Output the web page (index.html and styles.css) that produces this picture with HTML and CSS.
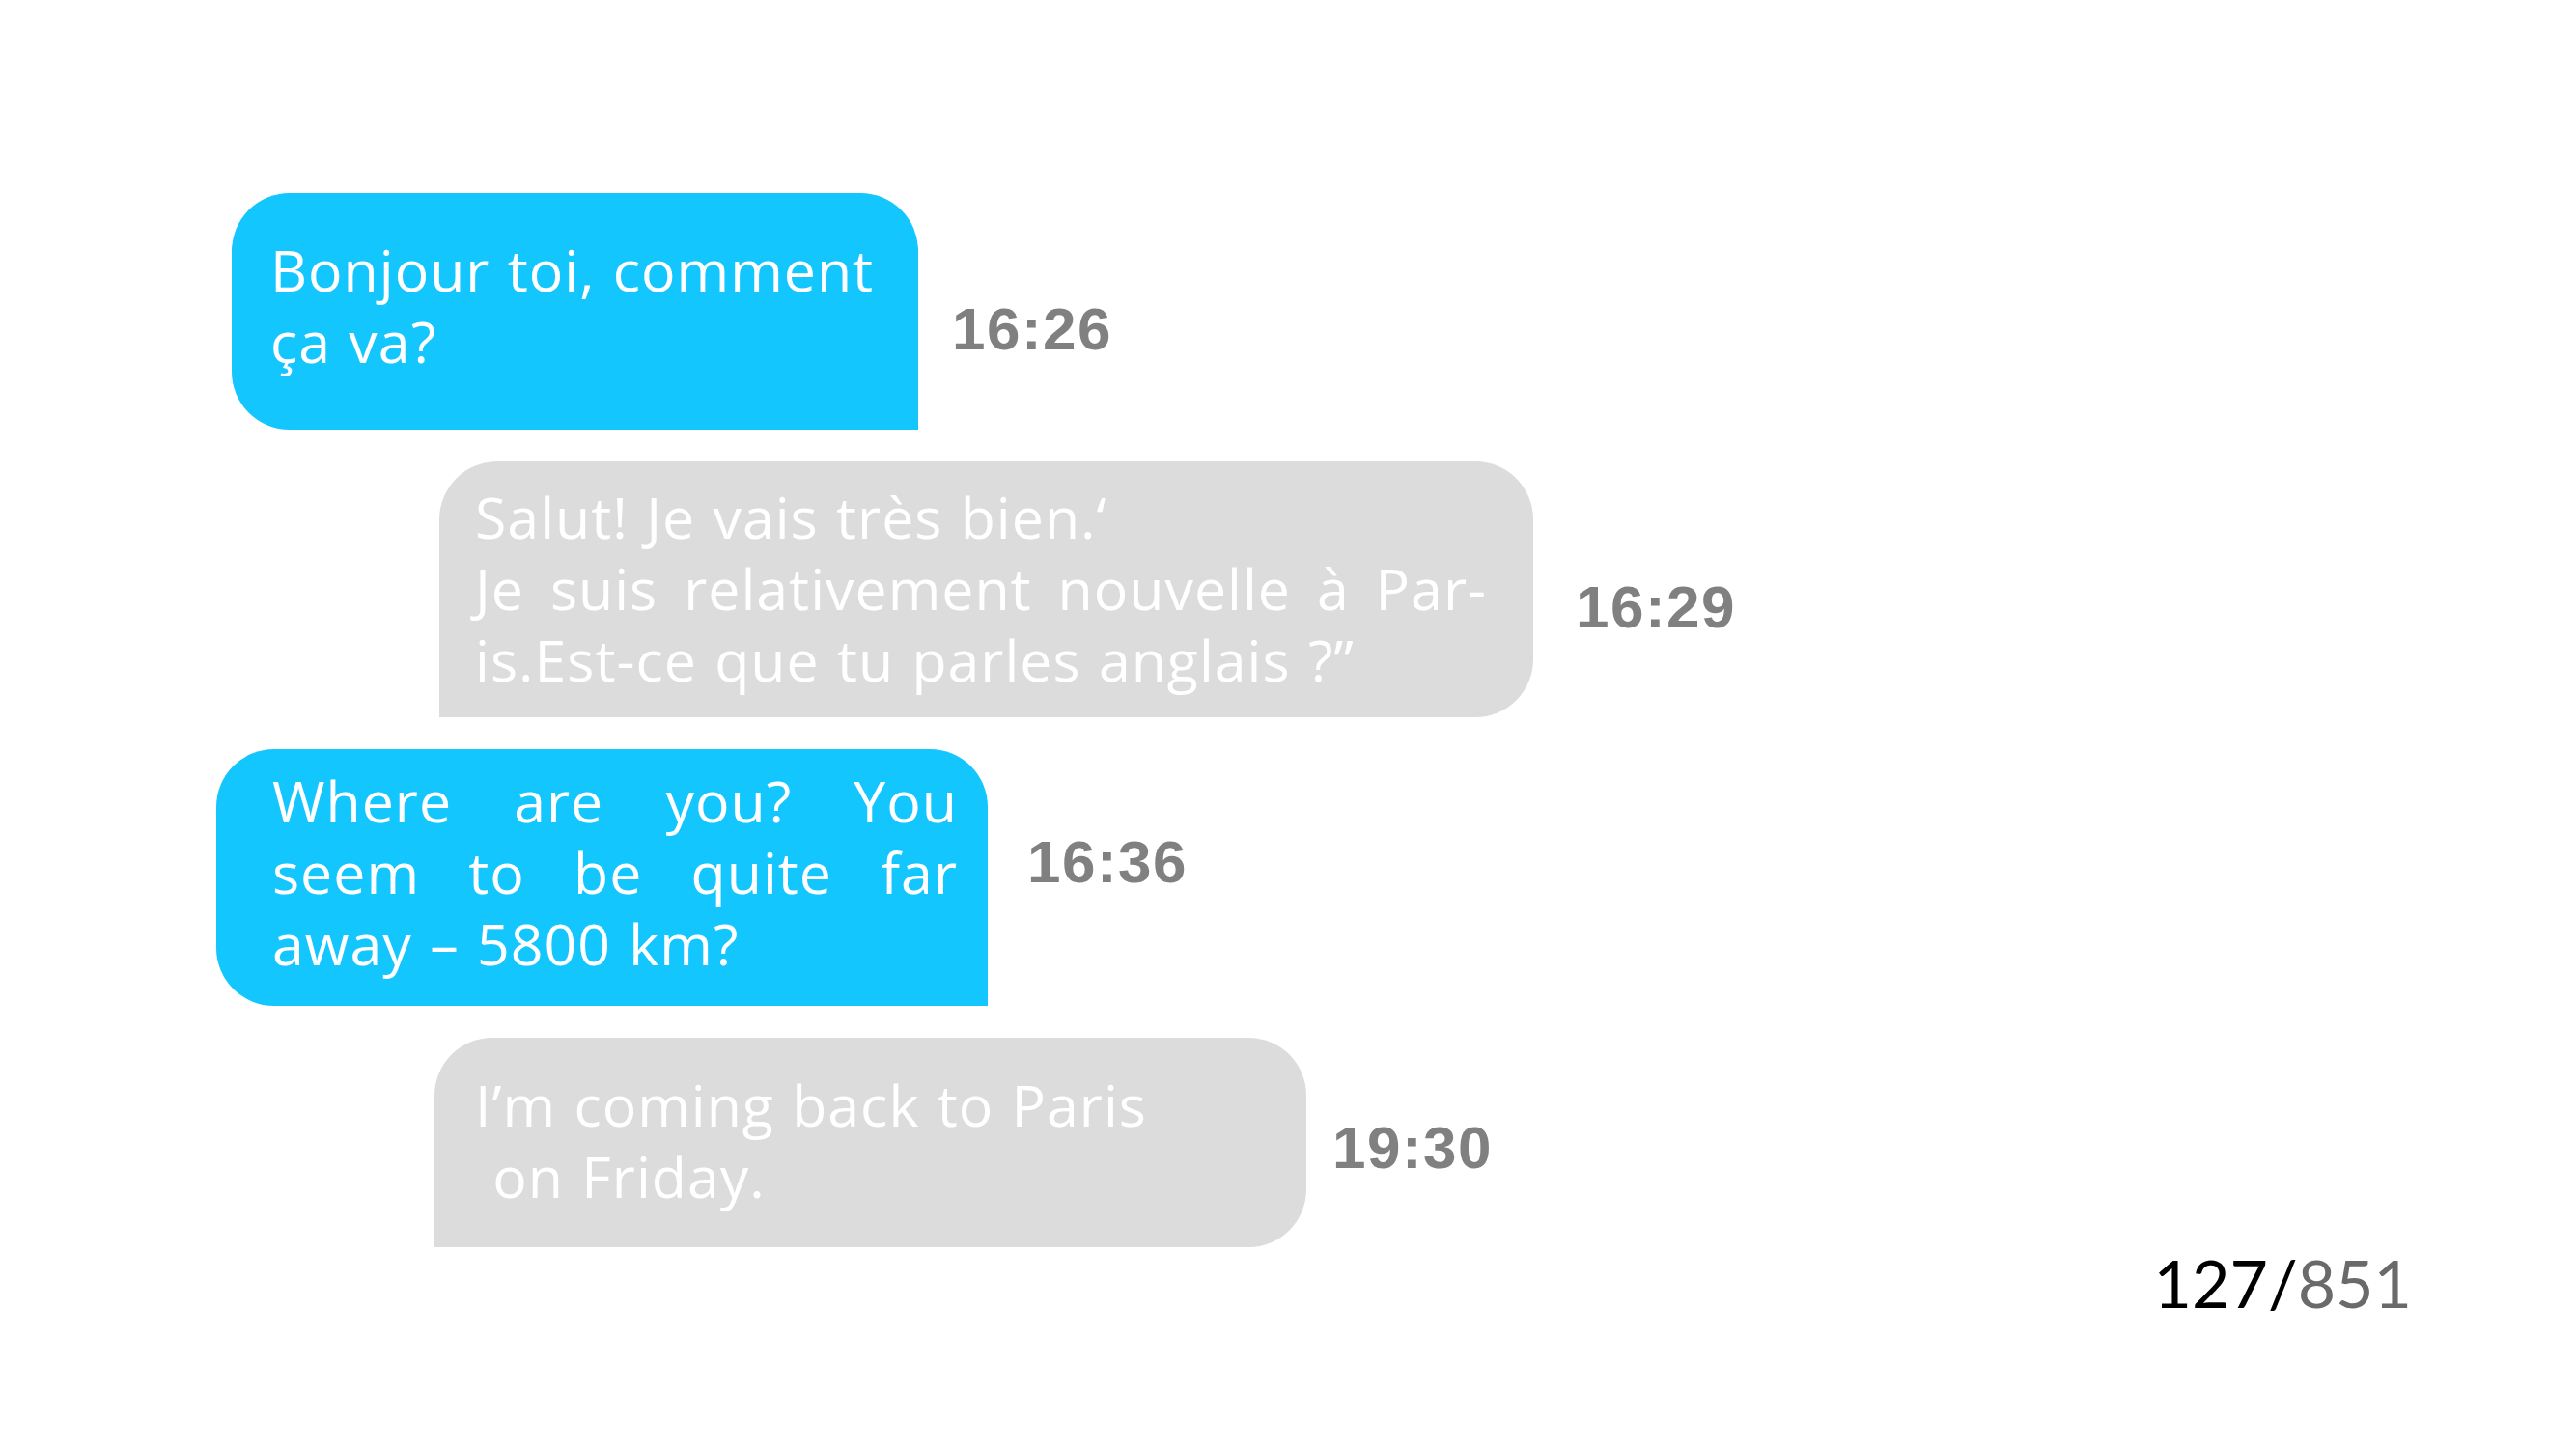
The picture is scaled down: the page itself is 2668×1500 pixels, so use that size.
FILE: index.html
```html
<!DOCTYPE html>
<html lang="fr">
<head>
<meta charset="utf-8">
<title>Chat</title>
<link rel="stylesheet" href="styles.css">
</head>
<body>
<main class="chat">
  <div class="row row-1">
    <div class="bubble bubble-blue bubble-1">
      <span class="line">Bonjour toi, comment</span>
      <span class="line">ça va?</span>
    </div>
    <span class="time time-1">16:26</span>
  </div>
  <div class="row row-2">
    <div class="bubble bubble-gray bubble-2">
      <span class="line">Salut! Je vais très bien.‘</span>
      <span class="line just">Je suis relativement nouvelle à Par-</span>
      <span class="line">is.Est-ce que tu parles anglais ?”</span>
    </div>
    <span class="time time-2">16:29</span>
  </div>
  <div class="row row-3">
    <div class="bubble bubble-blue bubble-3">
      <span class="line just">Where are you? You</span>
      <span class="line just">seem to be quite far</span>
      <span class="line">away – 5800 km?</span>
    </div>
    <span class="time time-3">16:36</span>
  </div>
  <div class="row row-4">
    <div class="bubble bubble-gray bubble-4">
      <span class="line">I’m coming back to Paris</span>
      <span class="line">&nbsp;on Friday.</span>
    </div>
    <span class="time time-4">19:30</span>
  </div>
</main>
<footer class="counter"><span class="counter-current">127/</span><span class="counter-total">851</span></footer>
</body>
</html>
```

FILE: styles.css
```css
html, body {
  margin: 0;
  padding: 0;
  background: #ffffff;
}

body {
  width: 2668px;
  height: 1500px;
  overflow: hidden;
}

.chat {
  display: flex;
  flex-direction: column;
  gap: 33px;
  padding-top: 200px;
}

.row {
  display: flex;
  align-items: flex-start;
}

.row-1 { padding-left: 240px; }
.row-2 { padding-left: 455px; }
.row-3 { padding-left: 224px; }
.row-4 { padding-left: 450px; }

.bubble {
  box-sizing: border-box;
  font-family: "Open Sans", "Noto Sans", sans-serif;
  font-weight: 400;
  font-size: 59px;
  line-height: 74px;
  letter-spacing: 1px;
  word-spacing: 2px;
  color: #ffffff;
}

.bubble-blue { background: #13c6fe; }
.bubble-gray { background: #dcdcdc; }

.bubble-1 {
  width: 711px;
  padding: 42px 0 55px 40px;
  border-radius: 60px 60px 0 60px;
}

.bubble-2 {
  width: 1133px;
  padding: 20px 48px 23px 37px;
  border-radius: 60px 60px 60px 0;
}

.bubble-3 {
  width: 799px;
  padding: 16px 31px 28px 58px;
  border-radius: 60px 60px 0 60px;
}

.bubble-4 {
  width: 903px;
  padding: 32px 0 37px 42px;
  border-radius: 60px 60px 60px 0;
}

.line {
  display: block;
  white-space: nowrap;
}

.line.just {
  white-space: normal;
  word-spacing: 0;
  text-align: justify;
  text-align-last: justify;
}

.time {
  font-family: "Liberation Sans", Arial, sans-serif;
  font-weight: 700;
  font-size: 62px;
  line-height: 60px;
  letter-spacing: 1.5px;
  color: #808080;
}

.time-1 { margin: 111px 0 0 35px; }
.time-2 { margin: 121px 0 0 44px; }
.time-3 { margin: 87px 0 0 41px; }
.time-4 { margin: 84px 0 0 27px; }

.counter {
  margin-top: 3px;
  padding-right: 170px;
  text-align: right;
  font-family: Lato, "Open Sans", sans-serif;
  font-size: 68px;
  line-height: 68px;
}

.counter-current { color: #000000; }
.counter-total { color: #6a6a6a; }
```
